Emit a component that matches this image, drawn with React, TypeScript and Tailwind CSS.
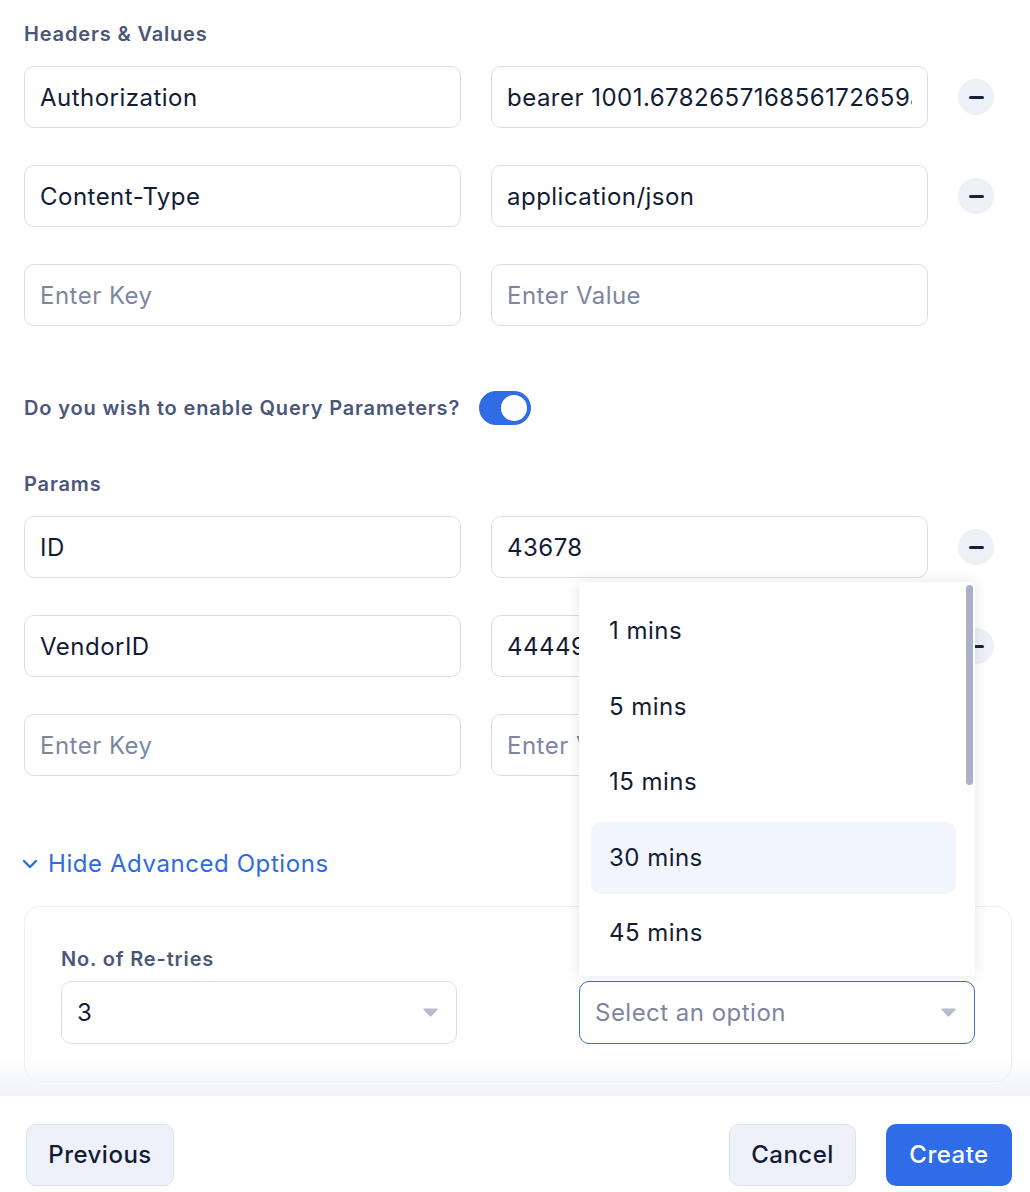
import { useState } from 'react';

type Pair = { key: string; value: string };

const headerRows: Pair[] = [
  { key: 'Authorization', value: 'bearer 1001.678265716856172659a8f7c2e' },
  { key: 'Content-Type', value: 'application/json' },
];

const paramRows: Pair[] = [
  { key: 'ID', value: '43678' },
  { key: 'VendorID', value: '44449' },
];

const intervals = ['1 mins', '5 mins', '15 mins', '30 mins', '45 mins'];

const fieldClass =
  'h-[62px] w-full rounded-[10px] border border-[#dadeea] bg-white px-[15px] text-[24px] tracking-[0.02em] text-[#131c35] outline-none placeholder:text-[#7c879f]';

const labelClass = 'text-[20px] font-semibold leading-[30px] tracking-[0.042em] text-[#4b5779]';

const ghostButton =
  'h-[62px] rounded-[10px] border border-[#dde1ee] bg-[#eef1f9] text-[24px] font-medium tracking-[0.02em] text-[#131c35]';

function MinusButton() {
  return (
    <button
      type="button"
      className="flex h-9 w-9 items-center justify-center rounded-full bg-[#eef0f7]"
    >
      <span className="mt-[1px] block h-[3px] w-[15px] rounded-full bg-[#18213a]" />
    </button>
  );
}

function KeyValueRows({ rows }: { rows: Pair[] }) {
  return (
    <div className="flex flex-col gap-[37px]">
      {rows.map((row) => (
        <div key={row.key} className="grid grid-cols-[437px_437px_36px] items-center gap-[30px]">
          <input className={fieldClass} defaultValue={row.key} />
          <input className={fieldClass} defaultValue={row.value} />
          <MinusButton />
        </div>
      ))}
      <div className="grid grid-cols-[437px_437px_36px] items-center gap-[30px]">
        <input className={fieldClass} placeholder="Enter Key" />
        <input className={fieldClass} placeholder="Enter Value" />
        <span />
      </div>
    </div>
  );
}

function Caret() {
  return (
    <svg width="15" height="9" viewBox="0 0 15 9" className="shrink-0">
      <path d="M1 1.2h13L7.5 8z" fill="#b6bccc" stroke="#b6bccc" strokeLinejoin="round" strokeWidth="1.5" />
    </svg>
  );
}

function Toggle({ on, onChange }: { on: boolean; onChange: (v: boolean) => void }) {
  return (
    <button
      type="button"
      onClick={() => onChange(!on)}
      className={`flex h-[34px] w-[52px] items-center rounded-full px-[4px] ${
        on ? 'justify-end bg-[#2f6ce6]' : 'justify-start bg-[#d5d9e4]'
      }`}
    >
      <span className="block h-[26px] w-[26px] rounded-full bg-white" />
    </button>
  );
}

export default function App() {
  const [queryOn, setQueryOn] = useState(true);
  const [selected] = useState('30 mins');

  return (
    <div className="flex min-h-[1192px] w-[1030px] flex-col bg-white font-['Inter','Noto_Sans',sans-serif]">
      <div className="relative">
        <main className="px-6 pt-[19px] pb-[14px]">
          <h3 className={labelClass}>Headers &amp; Values</h3>
          <div className="mt-[17px]">
            <KeyValueRows rows={headerRows} />
          </div>

          <div className="mt-[65px] flex items-center gap-[19px]">
            <span className={labelClass}>Do you wish to enable Query Parameters?</span>
            <Toggle on={queryOn} onChange={setQueryOn} />
          </div>

          <h3 className={`mt-[44px] ${labelClass}`}>Params</h3>
          <div className="mt-[17px]">
            <KeyValueRows rows={paramRows} />
          </div>

          <button
            type="button"
            className="mt-[70px] flex items-center gap-[10px] text-[24px] leading-[36px] tracking-[0.024em] text-[#2f6bdf]"
          >
            <svg width="16" height="10" viewBox="0 0 16 10" fill="none" className="-ml-[2px]">
              <path d="M2 2l6 6 6-6" stroke="#2f6bdf" strokeWidth="2.4" strokeLinecap="round" strokeLinejoin="round" />
            </svg>
            Hide Advanced Options
          </button>

          <section className="mt-[24px] w-[988px] rounded-[16px] border border-[#eceef4] px-[36px] pt-[37px] pb-[37px]">
            <div className="grid grid-cols-[396px_396px] gap-x-[122px]">
              <div>
                <label className={`block ${labelClass}`}>No. of Re-tries</label>
                <div className="mt-[7px] flex h-[63px] items-center justify-between rounded-[10px] border border-[#dadeea] bg-white pr-[18px] pl-[15px]">
                  <span className="text-[24px] text-[#131c35]">3</span>
                  <Caret />
                </div>
              </div>

              <div className="relative">
                <label className={`block ${labelClass}`}>Retry Interval</label>
                <div className="mt-[7px] flex h-[63px] items-center justify-between rounded-[10px] border border-[#3b6fd6] bg-white pr-[18px] pl-[15px]">
                  <span className="text-[24px] tracking-[0.02em] text-[#7c879f]">Select an option</span>
                  <Caret />
                </div>

                {/* open listbox, sits right above the trigger */}
                <div className="absolute bottom-[68px] left-0 h-[394px] w-[396px] overflow-hidden rounded-[4px] bg-white shadow-[0_0_14px_rgba(30,40,70,0.12)]">
                  <ul className="flex flex-col pt-[13px] pr-[19px] pl-[12px]">
                    {intervals.map((opt) => (
                      <li
                        key={opt}
                        className={`mb-[3.6px] flex h-[72px] items-center rounded-[10px] px-[18px] text-[24px] tracking-[0.02em] text-[#131c35] ${
                          opt === selected ? 'bg-[#f2f5fc]' : ''
                        }`}
                      >
                        {opt}
                      </li>
                    ))}
                  </ul>
                  <div className="absolute top-[3px] right-[2px] h-[200px] w-[7px] rounded-full bg-[#a8b1c8]" />
                </div>
              </div>
            </div>
          </section>
        </main>
        <div className="pointer-events-none absolute inset-x-0 bottom-0 h-[40px] bg-gradient-to-b from-white/0 to-[#f2f3f7]" />
      </div>

      <footer className="flex items-center justify-between pt-[28px] pr-[18px] pl-[26px]">
        <button type="button" className={`w-[148px] ${ghostButton}`}>
          Previous
        </button>
        <div className="flex gap-[30px]">
          <button type="button" className={`w-[127px] ${ghostButton}`}>
            Cancel
          </button>
          <button
            type="button"
            className="h-[62px] w-[126px] rounded-[10px] bg-[#2f6ce8] text-[24px] font-medium tracking-[0.02em] text-white"
          >
            Create
          </button>
        </div>
      </footer>
    </div>
  );
}
